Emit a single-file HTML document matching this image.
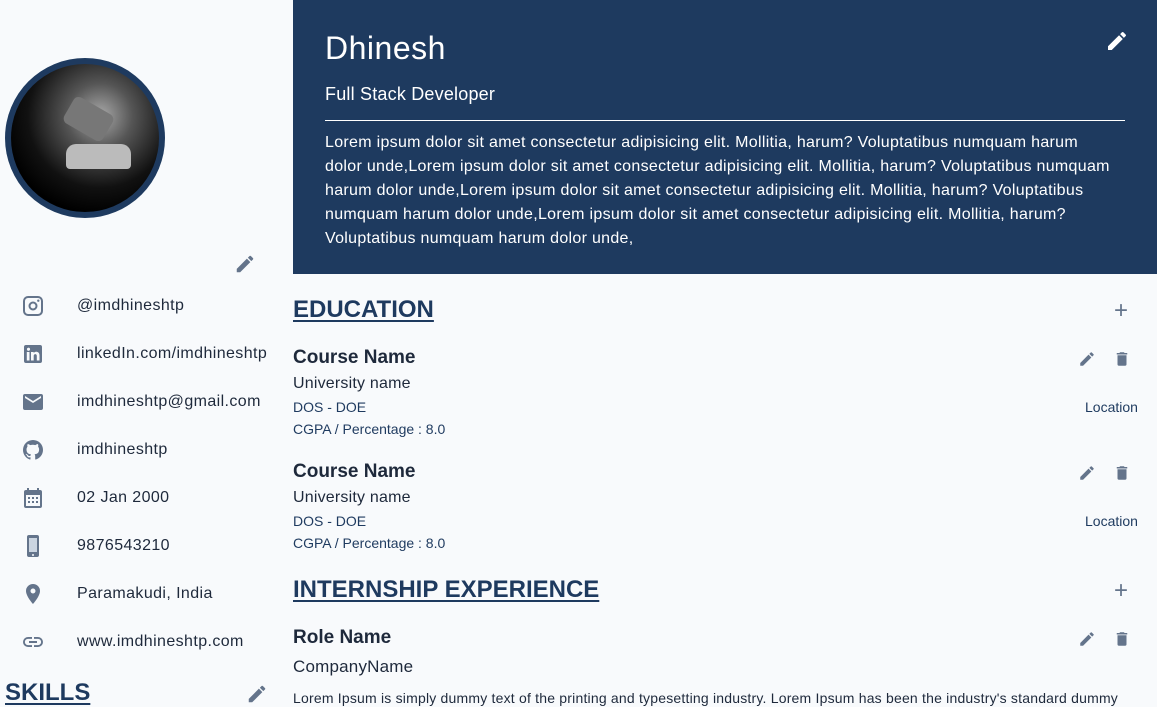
<!DOCTYPE html>
<html><head><meta charset="utf-8"><style>
*{margin:0;padding:0;box-sizing:border-box}
body{width:1157px;height:704px;overflow:hidden;background:#f8fafc;font-family:"Liberation Sans",sans-serif;color:#1e293b;position:relative}
.abs{position:absolute}
.hdr{left:293px;top:0;width:864px;height:274px;background:#1e3a5f;color:#fff}
.ico{fill:#64748b}
.ct{font-size:16px;color:#1e293b;letter-spacing:0.4px}
h2{position:absolute;font-size:24px;color:#1e3a5f;text-decoration:underline;text-underline-offset:3px;font-weight:bold;letter-spacing:0px}
.cn{font-size:19px;font-weight:bold}
.un{font-size:16px;letter-spacing:0.2px}
.sm{font-size:14px;color:#1e3a5f}
</style></head><body>
<div class="abs" style="left:5px;top:58px;width:160px;height:160px;border-radius:50%;background:#1e3a5f;padding:6px">
<div style="width:148px;height:148px;border-radius:50%;background:radial-gradient(circle at 60% 35%,#aaa 0,#555 25%,#111 55%,#000 75%);position:relative;overflow:hidden">
<div style="position:absolute;left:55px;top:40px;width:45px;height:30px;background:#777;transform:rotate(30deg);border-radius:6px"></div>
<div style="position:absolute;left:55px;top:80px;width:65px;height:25px;background:#bbb;border-radius:10px 10px 4px 4px"></div>
</div></div>
<svg class="abs ico" style="left:234px;top:253px" width="22" height="22" viewBox="0 0 24 24"><path d="M3 17.25V21h3.75L17.81 9.94l-3.75-3.75L3 17.25zM20.71 7.04a1 1 0 000-1.41l-2.34-2.34a1 1 0 00-1.41 0l-1.83 1.83 3.75 3.75 1.83-1.83z"/></svg>
<svg class="abs ico" style="left:21px;top:294px" width="24" height="24" viewBox="0 0 24 24"><path d="M7 2h10a5 5 0 015 5v10a5 5 0 01-5 5H7a5 5 0 01-5-5V7a5 5 0 015-5zm0 2a3 3 0 00-3 3v10a3 3 0 003 3h10a3 3 0 003-3V7a3 3 0 00-3-3H7zm5 3.5a4.5 4.5 0 110 9 4.5 4.5 0 010-9zm0 2a2.5 2.5 0 100 5 2.5 2.5 0 000-5zM17.3 5.5a1.2 1.2 0 110 2.4 1.2 1.2 0 010-2.4z"/></svg>
<svg class="abs ico" style="left:21px;top:342px" width="24" height="24" viewBox="0 0 24 24"><path d="M19 3a2 2 0 012 2v14a2 2 0 01-2 2H5a2 2 0 01-2-2V5a2 2 0 012-2h14zM8.5 18.5V10h-2.7v8.5h2.7zM7.1 8.8a1.6 1.6 0 100-3.1 1.6 1.6 0 000 3.1zM18.5 18.5v-5c0-2.7-1.5-3.7-3.3-3.7-1.4 0-2.2.8-2.5 1.3V10h-2.7v8.5h2.7v-4.6c0-1.1.7-1.8 1.6-1.8.9 0 1.5.6 1.5 1.8v4.6h2.7z"/></svg>
<svg class="abs ico" style="left:21px;top:390px" width="24" height="24" viewBox="0 0 24 24"><path d="M20 4H4a2 2 0 00-2 2v12a2 2 0 002 2h16a2 2 0 002-2V6a2 2 0 00-2-2zm0 4l-8 5-8-5V6l8 5 8-5v2z"/></svg>
<svg class="abs ico" style="left:21px;top:438px" width="24" height="24" viewBox="0 0 24 24"><path d="M12 2A10 10 0 002 12c0 4.4 2.9 8.2 6.8 9.5.5.1.7-.2.7-.5v-1.7c-2.8.6-3.4-1.3-3.4-1.3-.5-1.2-1.1-1.5-1.1-1.5-.9-.6.1-.6.1-.6 1 .1 1.5 1 1.5 1 .9 1.5 2.3 1.1 2.9.8.1-.6.3-1.1.6-1.3-2.2-.3-4.6-1.1-4.6-5 0-1.1.4-2 1-2.7-.1-.2-.4-1.3.1-2.6 0 0 .8-.3 2.7 1a9.4 9.4 0 015 0c1.9-1.3 2.7-1 2.7-1 .5 1.4.2 2.4.1 2.6.6.7 1 1.6 1 2.7 0 3.9-2.3 4.7-4.6 4.9.4.3.7.9.7 1.9V21c0 .3.2.6.7.5A10 10 0 0022 12 10 10 0 0012 2z"/></svg>
<svg class="abs ico" style="left:21px;top:486px" width="24" height="24" viewBox="0 0 24 24"><path d="M19 4h-1V2h-2v2H8V2H6v2H5a2 2 0 00-2 2v14a2 2 0 002 2h14a2 2 0 002-2V6a2 2 0 00-2-2zm0 16H5V9h14v11zM7 11h2v2H7zm4 0h2v2h-2zm4 0h2v2h-2zM7 15h2v2H7zm4 0h2v2h-2zm4 0h2v2h-2z"/></svg>
<svg class="abs ico" style="left:21px;top:534px" width="24" height="24" viewBox="0 0 24 24"><path d="M16 1H8a2 2 0 00-2 2v18a2 2 0 002 2h8a2 2 0 002-2V3a2 2 0 00-2-2zm-4 21a1 1 0 110-2 1 1 0 010 2zm4-4H8V4h8v14z"/><rect x="8" y="4" width="8" height="14" fill="#cbd5e1"/></svg>
<svg class="abs ico" style="left:21px;top:582px" width="24" height="24" viewBox="0 0 24 24"><path d="M12 2a7 7 0 00-7 7c0 5.3 7 13 7 13s7-7.7 7-13a7 7 0 00-7-7zm0 9.5a2.5 2.5 0 110-5 2.5 2.5 0 010 5z"/></svg>
<svg class="abs ico" style="left:21px;top:630px" width="24" height="24" viewBox="0 0 24 24"><path d="M3.9 12c0-1.7 1.4-3.1 3.1-3.1h4V7H7a5 5 0 000 10h4v-1.9H7c-1.7 0-3.1-1.4-3.1-3.1zM8 13h8v-2H8v2zm9-6h-4v1.9h4c1.7 0 3.1 1.4 3.1 3.1s-1.4 3.1-3.1 3.1h-4V17h4a5 5 0 000-10z"/></svg>
<div class="abs ct" style="left:77px;top:297px">@imdhineshtp</div>
<div class="abs ct" style="left:77px;top:345px">linkedIn.com/imdhineshtp</div>
<div class="abs ct" style="left:77px;top:393px">imdhineshtp@gmail.com</div>
<div class="abs ct" style="left:77px;top:441px">imdhineshtp</div>
<div class="abs ct" style="left:77px;top:489px">02 Jan 2000</div>
<div class="abs ct" style="left:77px;top:537px">9876543210</div>
<div class="abs ct" style="left:77px;top:585px">Paramakudi, India</div>
<div class="abs ct" style="left:77px;top:633px">www.imdhineshtp.com</div>
<h2 style="left:5px;top:679px">SKILLS</h2>
<svg class="abs ico" style="left:246px;top:683px" width="22" height="22" viewBox="0 0 24 24"><path d="M3 17.25V21h3.75L17.81 9.94l-3.75-3.75L3 17.25zM20.71 7.04a1 1 0 000-1.41l-2.34-2.34a1 1 0 00-1.41 0l-1.83 1.83 3.75 3.75 1.83-1.83z"/></svg>

<div class="abs hdr">
<div class="abs" style="left:32px;top:30px;font-size:32px;letter-spacing:0.5px">Dhinesh</div>
<svg class="abs" style="left:812px;top:29px" width="24" height="24" viewBox="0 0 24 24" fill="#fff"><path d="M3 17.25V21h3.75L17.81 9.94l-3.75-3.75L3 17.25zM20.71 7.04a1 1 0 000-1.41l-2.34-2.34a1 1 0 00-1.41 0l-1.83 1.83 3.75 3.75 1.83-1.83z"/></svg>
<div class="abs" style="left:32px;top:84px;font-size:18px;letter-spacing:0.2px">Full Stack Developer</div>
<div class="abs" style="left:32px;top:120px;width:800px;height:1px;background:#fff"></div>
<div class="abs" style="left:32px;top:131px;width:790px;font-size:16px;line-height:24px;letter-spacing:0.3px">Lorem ipsum dolor sit amet consectetur adipisicing elit. Mollitia, harum? Voluptatibus numquam harum<br>dolor unde,Lorem ipsum dolor sit amet consectetur adipisicing elit. Mollitia, harum? Voluptatibus numquam<br>harum dolor unde,Lorem ipsum dolor sit amet consectetur adipisicing elit. Mollitia, harum? Voluptatibus<br>numquam harum dolor unde,Lorem ipsum dolor sit amet consectetur adipisicing elit. Mollitia, harum?<br>Voluptatibus numquam harum dolor unde,</div>
</div>

<h2 style="left:293px;top:296px">EDUCATION</h2>
<div class="abs" style="left:1114px;top:297px;font-size:24px;color:#64748b;font-weight:300">+</div>
<div class="abs cn" style="left:293px;top:347px">Course Name</div>
<div class="abs un" style="left:293px;top:375px">University name</div>
<div class="abs sm" style="left:293px;top:399px">DOS - DOE</div>
<div class="abs sm" style="left:1085px;top:399px">Location</div>
<div class="abs sm" style="left:293px;top:421px">CGPA / Percentage : 8.0</div>
<div class="abs cn" style="left:293px;top:461px">Course Name</div>
<div class="abs un" style="left:293px;top:489px">University name</div>
<div class="abs sm" style="left:293px;top:513px">DOS - DOE</div>
<div class="abs sm" style="left:1085px;top:513px">Location</div>
<div class="abs sm" style="left:293px;top:535px">CGPA / Percentage : 8.0</div>
<h2 style="left:293px;top:576px">INTERNSHIP EXPERIENCE</h2>
<div class="abs" style="left:1114px;top:577px;font-size:24px;color:#64748b;font-weight:300">+</div>
<div class="abs cn" style="left:293px;top:627px">Role Name</div>
<div class="abs" style="left:293px;top:657px;font-size:17px;letter-spacing:0.2px">CompanyName</div>
<div class="abs" style="left:293px;top:690px;font-size:14px;white-space:nowrap;letter-spacing:0.2px">Lorem Ipsum is simply dummy text of the printing and typesetting industry. Lorem Ipsum has been the industry's standard dummy</div>

<svg class="abs ico" style="left:1078px;top:350px" width="18" height="18" viewBox="0 0 24 24"><path d="M3 17.25V21h3.75L17.81 9.94l-3.75-3.75L3 17.25zM20.71 7.04a1 1 0 000-1.41l-2.34-2.34a1 1 0 00-1.41 0l-1.83 1.83 3.75 3.75 1.83-1.83z"/></svg>
<svg class="abs ico" style="left:1113px;top:350px" width="18" height="18" viewBox="0 0 24 24"><path d="M6 19a2 2 0 002 2h8a2 2 0 002-2V7H6v12zM19 4h-3.5l-1-1h-5l-1 1H5v2h14V4z"/></svg>
<svg class="abs ico" style="left:1078px;top:464px" width="18" height="18" viewBox="0 0 24 24"><path d="M3 17.25V21h3.75L17.81 9.94l-3.75-3.75L3 17.25zM20.71 7.04a1 1 0 000-1.41l-2.34-2.34a1 1 0 00-1.41 0l-1.83 1.83 3.75 3.75 1.83-1.83z"/></svg>
<svg class="abs ico" style="left:1113px;top:464px" width="18" height="18" viewBox="0 0 24 24"><path d="M6 19a2 2 0 002 2h8a2 2 0 002-2V7H6v12zM19 4h-3.5l-1-1h-5l-1 1H5v2h14V4z"/></svg>
<svg class="abs ico" style="left:1078px;top:630px" width="18" height="18" viewBox="0 0 24 24"><path d="M3 17.25V21h3.75L17.81 9.94l-3.75-3.75L3 17.25zM20.71 7.04a1 1 0 000-1.41l-2.34-2.34a1 1 0 00-1.41 0l-1.83 1.83 3.75 3.75 1.83-1.83z"/></svg>
<svg class="abs ico" style="left:1113px;top:630px" width="18" height="18" viewBox="0 0 24 24"><path d="M6 19a2 2 0 002 2h8a2 2 0 002-2V7H6v12zM19 4h-3.5l-1-1h-5l-1 1H5v2h14V4z"/></svg>
</body></html>
